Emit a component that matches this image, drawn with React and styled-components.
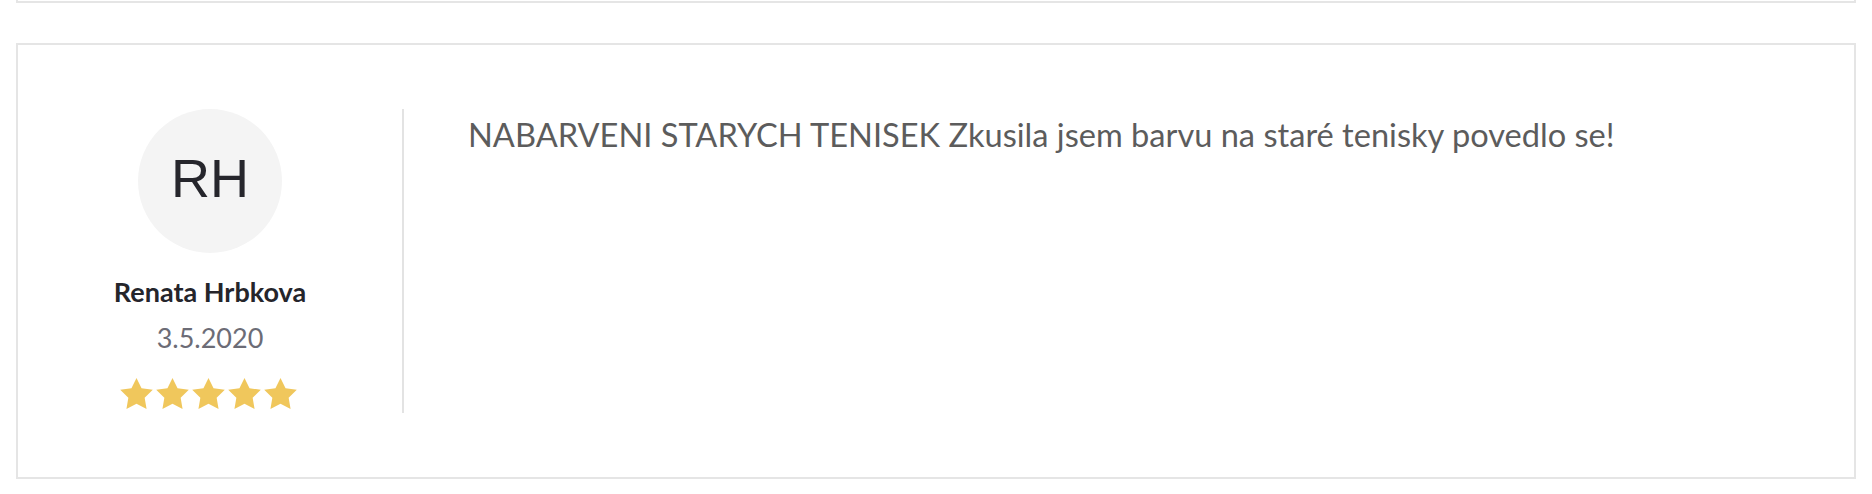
import styled, { createGlobalStyle } from 'styled-components';

const GlobalStyle = createGlobalStyle`
  body {
    margin: 0;
    background: #fff;
    font-family: Lato, "Open Sans", sans-serif;
  }
`;

const Page = styled.div`
  padding: 0 16px;
`;

const PrevCardEdge = styled.div`
  height: 3px;
  box-sizing: border-box;
  border: 2px solid #e5e5e5;
  border-top: none;
`;

const ReviewCard = styled.div`
  margin-top: 40px;
  border: 2px solid #e5e5e5;
  padding: 64px 0;
  display: flex;
  min-height: 304px;
`;

const Author = styled.div`
  width: 384px;
  flex-shrink: 0;
  display: flex;
  flex-direction: column;
  align-items: center;
`;

const Avatar = styled.div`
  width: 144px;
  height: 144px;
  border-radius: 50%;
  background: #f4f4f4;
  display: flex;
  align-items: center;
  justify-content: center;
  box-sizing: border-box;
  padding-bottom: 6px;
  font-family: "Liberation Sans", Arial, sans-serif;
  font-size: 54px;
  color: #26262c;
`;

const Name = styled.div`
  margin-top: 22px;
  font-size: 27px;
  line-height: 34px;
  font-weight: 700;
  color: #25252b;
`;

const DateText = styled.div`
  margin-top: 12px;
  font-size: 27px;
  line-height: 34px;
  color: #6c6c76;
`;

const Stars = styled.div`
  margin-top: 23px;
  margin-right: 3px;
  display: flex;
  gap: 3px;
`;

const Body = styled.div`
  flex: 1;
  border-left: 2px solid #e3e3e3;
  padding: 0 64px;
  font-size: 32.6px;
  line-height: 51px;
  color: #5c5c5c;
`;

const Star = ({ color = '#f0c75c' }) => (
  <svg width="33" height="31" viewBox="2 2 20 19.02">
    <path
      fill={color}
      d="M12 2l3.09 6.26L22 9.27l-5 4.87 1.18 6.88L12 17.77l-6.18 3.25L7 14.14 2 9.27l6.91-1.01L12 2z"
    />
  </svg>
);

const review = {
  initials: 'RH',
  name: 'Renata Hrbkova',
  date: '3.5.2020',
  rating: 5,
  text: 'NABARVENI STARYCH TENISEK Zkusila jsem barvu na staré tenisky povedlo se!',
};

export default function App() {
  return (
    <Page>
      <GlobalStyle />
      <PrevCardEdge />
      <ReviewCard>
        <Author>
          <Avatar>{review.initials}</Avatar>
          <Name>{review.name}</Name>
          <DateText>{review.date}</DateText>
          <Stars>
            {Array.from({ length: review.rating }).map((_, i) => (
              <Star key={i} />
            ))}
          </Stars>
        </Author>
        <Body>{review.text}</Body>
      </ReviewCard>
    </Page>
  );
}
